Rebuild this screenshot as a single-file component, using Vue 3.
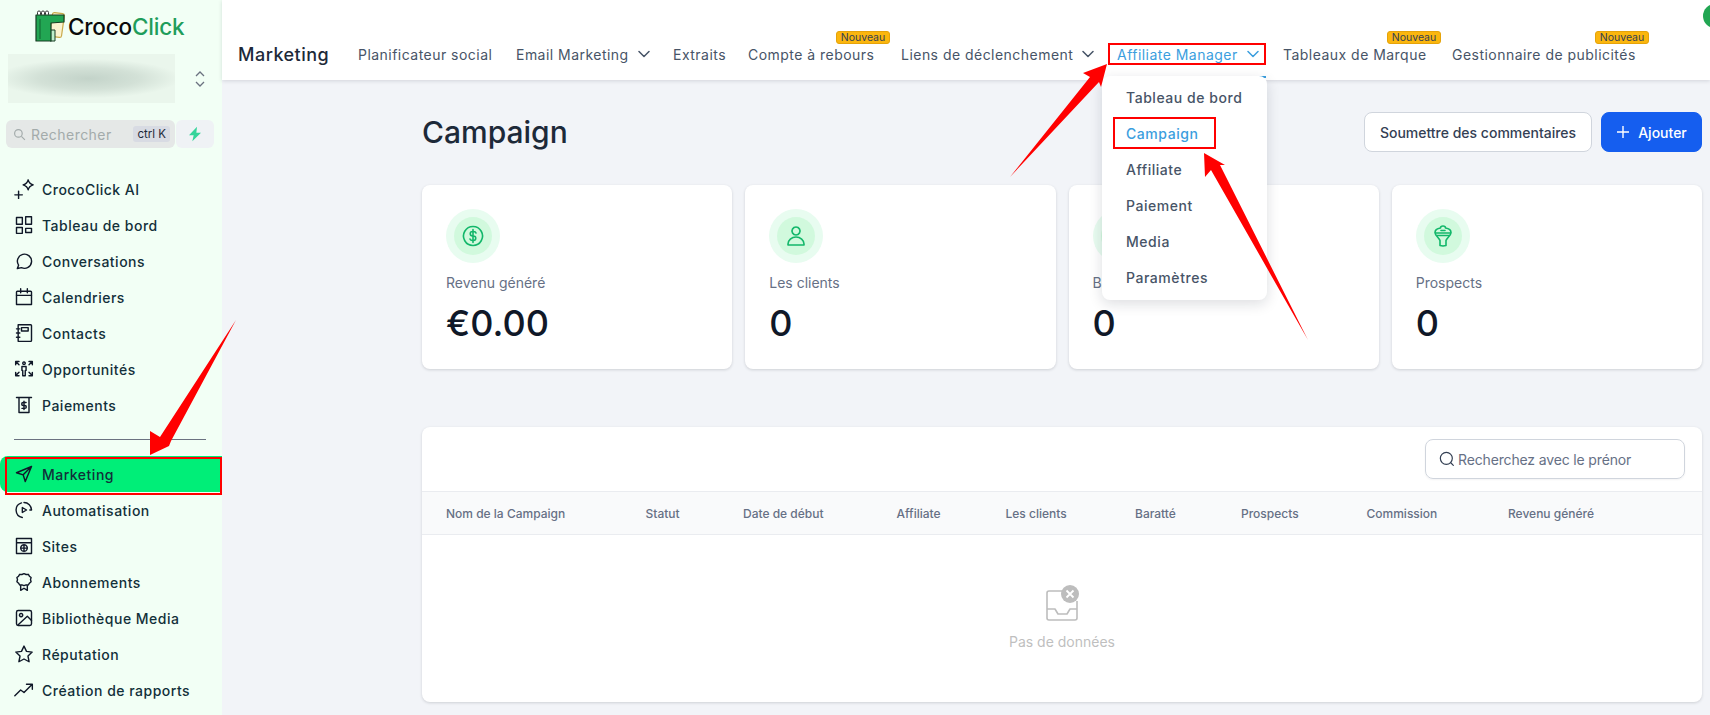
<template>
  <div class="page">
    <aside class="sidebar">
      <div class="logo">
        <svg class="logo-mark" viewBox="0 0 30 32" xmlns="http://www.w3.org/2000/svg">
          <rect x="16" y="3" width="12" height="24" rx="2" transform="rotate(8 22 15)" fill="#fbf3d0" stroke="#c9a94a" stroke-width="1.2" />
          <rect x="2.5" y="1" width="3" height="5" rx="1.4" fill="#fff" stroke="#333" />
          <rect x="6.5" y="1" width="3" height="5" rx="1.4" fill="#fff" stroke="#333" />
          <rect x="10.5" y="1" width="3" height="5" rx="1.4" fill="#fff" stroke="#333" />
          <path d="M15 31V20h5v11z" fill="#bfeecb" stroke="#173d23" />
          <path d="M1 5h28v7l-13 1v18H1z" fill="#22a653" stroke="#173d23" stroke-width="1.2" stroke-linejoin="round" />
          <path d="M5 9v20" stroke="#177a3b" stroke-width="1.5" />
        </svg>
        <span class="logo-text">Croco<span class="logo-green">Click</span></span>
      </div>

      <div class="account">
        <div class="account-blur"></div>
        <svg class="updown" viewBox="0 0 12 20" fill="none" stroke="#6b7280" stroke-width="1.3">
          <path d="M2 7l4-4 4 4M2 13l4 4 4-4" />
        </svg>
      </div>

      <div class="search-row">
        <div class="side-search">
          <svg viewBox="0 0 24 24" fill="none" stroke="#a3abab" stroke-width="2.2" class="side-search-icon">
            <circle cx="10" cy="10" r="7" />
            <path d="M15.5 15.5L22 22" />
          </svg>
          <span class="side-placeholder">Rechercher</span>
          <span class="kbd">ctrl K</span>
        </div>
        <div class="bolt">
          <svg viewBox="0 0 24 24" width="16" height="16">
            <path d="M15 1L3 14h7l-2 9 13-13h-7z" fill="#35d49a" />
          </svg>
        </div>
      </div>

      <nav class="side-nav">
        <a v-for="item in sideTop" :key="item.label" class="side-item">
          <svg class="side-icon" viewBox="0 0 24 24" fill="none" stroke="#101828" stroke-width="1.7" stroke-linecap="round" stroke-linejoin="round">
            <path v-for="d in item.paths" :key="d" :d="d" />
          </svg>
          {{ item.label }}
        </a>
      </nav>
      <div class="side-sep"></div>
      <nav class="side-nav">
        <a v-for="item in sideBottom" :key="item.label" class="side-item" :class="{ active: item.active }">
          <svg class="side-icon" viewBox="0 0 24 24" fill="none" stroke="#101828" stroke-width="1.7" stroke-linecap="round" stroke-linejoin="round">
            <path v-for="d in item.paths" :key="d" :d="d" />
          </svg>
          {{ item.label }}
        </a>
      </nav>
    </aside>

    <div class="main">
      <header class="topbar">
        <span class="avatar"></span>
        <h2 class="topbar-title">Marketing</h2>
        <div class="topnav">
          <div v-for="link in topLinks" :key="link.label" class="topnav-item" :class="{ current: link.current }">
            <span class="topnav-label">{{ link.label }}</span>
            <svg v-if="link.caret" class="caret" viewBox="0 0 12 12" fill="none" stroke="currentColor" stroke-width="1.5" stroke-linecap="round" stroke-linejoin="round">
              <path d="M1 3.5l5 5 5-5" />
            </svg>
            <span v-if="link.badge" class="badge">Nouveau</span>
          </div>
        </div>
        <span class="current-line"></span>
        <div class="dropdown">
          <a v-for="entry in menu" :key="entry" class="dropdown-item" :class="{ on: entry === 'Campaign' }">{{ entry }}</a>
        </div>
      </header>

      <main class="content">
        <div class="title-row">
          <h1 class="title">Campaign</h1>
          <div class="actions">
            <button class="btn">Soumettre des commentaires</button>
            <button class="btn primary">
              <svg viewBox="0 0 14 14" width="14" height="14" fill="none" stroke="#fff" stroke-width="1.4"><path d="M7 1v12M1 7h12" /></svg>
              Ajouter
            </button>
          </div>
        </div>

        <div class="stats">
          <div v-for="stat in stats" :key="stat.label" class="stat">
            <div class="stat-ring">
              <div class="stat-disc">
                <svg viewBox="0 0 24 24" width="24" height="24" fill="none" stroke="#12b76a" stroke-width="1.6" stroke-linecap="round" stroke-linejoin="round">
                  <path v-for="d in stat.paths" :key="d" :d="d" />
                </svg>
              </div>
            </div>
            <div class="stat-label">{{ stat.label }}</div>
            <div class="stat-value">{{ stat.value }}</div>
          </div>
        </div>

        <section class="table-card">
          <div class="table-tools">
            <div class="table-search">
              <svg viewBox="0 0 24 24" width="16" height="16" fill="none" stroke="#344054" stroke-width="1.8" stroke-linecap="round">
                <circle cx="11" cy="11" r="9" />
                <path d="M18 18l3.5 3.5" />
              </svg>
              <span>Recherchez avec le prénor</span>
            </div>
          </div>
          <div class="table-head">
            <span v-for="col in columns" :key="col">{{ col }}</span>
          </div>
          <div class="empty">
            <svg viewBox="0 0 34 36" width="34" height="36" fill="none" stroke="#bdbdbd" stroke-width="1.6">
              <path d="M24 6H4a2 2 0 0 0-2 2v25a2 2 0 0 0 2 2h26a2 2 0 0 0 2-2V16" />
              <path d="M2 24h8l3 5h9l3-5h7" stroke-linejoin="round" />
              <circle cx="25" cy="9" r="9" fill="#bdbdbd" stroke="none" />
              <path d="M21.5 5.5l7 7M28.5 5.5l-7 7" stroke="#fff" stroke-width="1.8" />
            </svg>
            <span>Pas de données</span>
          </div>
        </section>
      </main>
    </div>

    <!-- red annotations drawn on top of the screenshot -->
    <svg class="marks" viewBox="0 0 1710 715" xmlns="http://www.w3.org/2000/svg">
      <g fill="none" stroke="#f00" stroke-width="2">
        <rect x="1109" y="44" width="156" height="20" />
        <rect x="1114" y="118" width="101" height="30" />
        <rect x="6" y="458" width="215" height="36" />
      </g>
      <g fill="#f00">
        <polygon points="1010,177 1090,77 1083,73 1107,64 1101,87 1099,82" />
        <polygon points="1308,340 1220,165 1225,165 1204,153 1205,177 1211,170" />
        <polygon points="236,320 171,441 169,446 150,455 150,431 160,437" />
      </g>
    </svg>
  </div>
</template>

<script setup>
const sideTop = [
  { label: 'CrocoClick AI', paths: ['M1 19h9M5.5 14.5v9', 'M17 1c.7 3.200 2.200 4.800 6 6-3.800 1.200-5.300 2.800-6 6-.7-3.200-2.200-4.800-6-6 3.800-1.200 5.300-2.800 6-6z'] },
  { label: 'Tableau de bord', paths: ['M3 3h7v8H3zM14 2h7v9h-7zM14 16h7v5h-7zM3 15h7v7H3z'] },
  { label: 'Conversations', paths: ['M4 21l1.500-4A8.500 8.500 0 1 1 9 20z'] },
  { label: 'Calendriers', paths: ['M4 5h16a1 1 0 0 1 1 1v15H3V6a1 1 0 0 1 1-1z', 'M3 10h18M8 2v5M16 2v5'] },
  { label: 'Contacts', paths: ['M5 2h15a1 1 0 0 1 1 1v18a1 1 0 0 1-1 1H5z', 'M9 5.500h8v4H9z', 'M3 7h4M3 12h4M3 17h4'] },
  { label: 'Opportunités', paths: ['M12 3.500a1.500 1.500 0 1 0 .01 0z', 'M9.500 9h5v4.500l-1 .5V20h-3v-6l-1-.5z', 'M2 3h4M2 3v4M3 4l3 3M22 3h-4M22 3v4M21 4l-3 3M2 20h4M2 20v-4M3 19l3-3M22 20h-4M22 20v-4M21 19l-3-3'] },
  { label: 'Paiements', paths: ['M3 3h18M6 3v18h12V3', 'M14.500 9h-3.500a1.500 1.500 0 0 0 0 3.500h2a1.500 1.500 0 0 1 0 3.500H9.500M12 7.500v10'] }
]

const sideBottom = [
  { label: 'Marketing', active: true, paths: ['M21 3L3 10.500l8 2.500 2.500 8zM11 13l10-10'] },
  { label: 'Automatisation', paths: ['M12 3a9 9 0 0 1 9 9h-2M10 21a9 9 0 0 1-1-17.500', 'M10 9l5 3-5 3z'] },
  { label: 'Sites', paths: ['M3 3h18v18H3zM3 8h18', 'M12 10.500a4 4 0 1 0 .01 0zM8 14.500h8M12 10.500v8'] },
  { label: 'Abonnements', paths: ['M12 2l2.500 1 2.700-.2 1.300 2.200 2 1.700-.7 2.500.7 2.500-2 1.700-1.300 2.200-2.700-.2-2.500 1-2.500-1-2.700.2-1.300-2.200-2-1.700.7-2.500-.7-2.500 2-1.700 1.300-2.200 2.700.2z', 'M8 16.500V22l4-2.500 4 2.500v-5.500'] },
  { label: 'Bibliothèque Media', paths: ['M5 3h14a2 2 0 0 1 2 2v14a2 2 0 0 1-2 2H5a2 2 0 0 1-2-2V5a2 2 0 0 1 2-2z', 'M8.500 6.500a2 2 0 1 0 .01 0zM5 20l11-10 5 5'] },
  { label: 'Réputation', paths: ['M12 2.500l3 6.300 6.800.9-5 4.800 1.300 6.800-6.100-3.300-6.100 3.300 1.300-6.800-5-4.800 6.800-.9z'] },
  { label: 'Création de rapports', paths: ['M1 19l7-7 4 3 9-9M15 5h7v6'] }
]

const topLinks = [
  { label: 'Planificateur social' },
  { label: 'Email Marketing', caret: true },
  { label: 'Extraits' },
  { label: 'Compte à rebours', badge: true },
  { label: 'Liens de déclenchement', caret: true },
  { label: 'Affiliate Manager', caret: true, current: true },
  { label: 'Tableaux de Marque', badge: true },
  { label: 'Gestionnaire de publicités', badge: true }
]

const menu = ['Tableau de bord', 'Campaign', 'Affiliate', 'Paiement', 'Media', 'Paramètres']

const stats = [
  { label: 'Revenu généré', value: '€0.00', paths: ['M12 2.500a9.500 9.500 0 1 0 .01 0z', 'M15 9a2.500 2 0 0 0-2.500-1.500h-1a2.200 2.200 0 0 0 0 4.500h1a2.200 2.200 0 0 1 0 4.500h-1A2.500 2 0 0 1 9 15M12 5.500v13'] },
  { label: 'Les clients', value: '0', paths: ['M12 3a4 4 0 1 0 .01 0z', 'M4 21v-1a8 7 0 0 1 16 0v1z'] },
  { label: 'Baratté', value: '0', paths: ['M12 3a9 9 0 1 0 .01 0z'] },
  { label: 'Prospects', value: '0', paths: ['M12 2c1.500 0 2.500 1 2.500 2 3 .5 5.500 2 5.500 4.500 0 3-4 5-5 8v5l-3 .5-3-.5v-5c-1-3-5-5-5-8C4 6 6.500 4.500 9.500 4c0-1 1-2 2.500-2z', 'M4.500 9h15M6 11.500h12M10 6.500h4'] }
]

const columns = ['Nom de la Campaign', 'Statut', 'Date de début', 'Affiliate', 'Les clients', 'Baratté', 'Prospects', 'Commission', 'Revenu généré']
</script>

<style scoped>
.page {
  position: relative;
  display: flex;
  width: 1710px;
  height: 715px;
  overflow: hidden;
  background: #f2f4f8;
  font-family: Inter, "Liberation Sans", sans-serif;
}

.sidebar {
  width: 222px;
  flex-shrink: 0;
  background: #f2fff5;
  color: #12303a;
}

.logo {
  display: flex;
  align-items: center;
  height: 32px;
  margin-top: 10px;
  padding-left: 35px;
}

.logo-mark {
  width: 30px;
  height: 32px;
}

.logo-text {
  margin-left: 3px;
  font-size: 22.5px;
  font-weight: 500;
  letter-spacing: -0.2px;
  color: #0b0b0b;
}

.logo-green {
  color: #1f9d5b;
}

.account {
  display: flex;
  align-items: center;
  height: 49px;
  margin-top: 12px;
  padding-left: 8px;
}

.account-blur {
  width: 167px;
  height: 49px;
  background: radial-gradient(ellipse 55% 40% at 48% 50%, #c3d3c9 0%, #d3e1d7 55%, #eaf6ec 100%);
}

.updown {
  width: 12px;
  height: 20px;
  margin-left: 19px;
}

.search-row {
  display: flex;
  margin-top: 17px;
  padding-left: 6px;
}

.side-search {
  display: flex;
  align-items: center;
  width: 169px;
  height: 28px;
  box-sizing: border-box;
  padding: 0 5px 0 7px;
  background: #e5e8e7;
  border-radius: 6px;
}

.side-search-icon {
  width: 13px;
  height: 13px;
}

.side-placeholder {
  margin-left: 5px;
  font-size: 14px;
  letter-spacing: 0.45px;
  color: #a3abab;
}

.kbd {
  margin-left: auto;
  padding: 0 4px;
  line-height: 16px;
  font-size: 11.5px;
  color: #1d2939;
  background: #d8dbe3;
  border-radius: 3px;
}

.bolt {
  display: flex;
  align-items: center;
  justify-content: center;
  width: 38px;
  height: 28px;
  margin-left: 1px;
  background: #eff2f5;
  border-radius: 6px;
}

.side-nav {
  display: flex;
  flex-direction: column;
}

.search-row + .side-nav {
  margin-top: 23px;
}

.side-item {
  display: flex;
  align-items: center;
  gap: 8px;
  height: 36px;
  padding-left: 14px;
  font-size: 14px;
  font-weight: 500;
  letter-spacing: 0.5px;
}

.side-item.active {
  background: #00ee78;
  border-radius: 8px 0 0 8px;
}

.side-icon {
  width: 20px;
  height: 20px;
  flex-shrink: 0;
}

.side-sep {
  width: 192px;
  height: 1px;
  margin: 16px 0 16px 14px;
  background: #6b7280;
}

.main {
  flex: 1;
  min-width: 0;
}

.topbar {
  position: relative;
  display: flex;
  align-items: center;
  height: 80px;
  padding: 28px 0 0 16px;
  box-sizing: border-box;
  background: #fff;
  box-shadow: 0 1px 4px rgba(16, 24, 40, 0.14);
}

.avatar {
  position: absolute;
  top: 4px;
  left: 1481px;
  width: 24px;
  height: 24px;
  background: #22a653;
  border-radius: 50%;
}

.topbar-title {
  width: 120px;
  margin: 0;
  font-size: 18px;
  font-weight: 500;
  letter-spacing: 0.5px;
  color: #1d2939;
}

.topnav {
  display: grid;
  grid-template-columns: 158px 157px 75px 153px 216px 166px 169px 190px;
  align-items: center;
  font-size: 14px;
  letter-spacing: 0.47px;
  color: #475467;
}

.topnav-item {
  position: relative;
  display: flex;
  align-items: center;
  gap: 9px;
  white-space: nowrap;
}

.topnav-item.current {
  color: #3b9ede;
}

.caret {
  width: 12px;
  height: 12px;
}

.badge {
  position: absolute;
  top: -15px;
  box-sizing: border-box;
  width: 54px;
  height: 13px;
  line-height: 12px;
  text-align: center;
  font-size: 10.5px;
  letter-spacing: 0;
  color: #344054;
  background: #fbb60e;
  border: 1px solid #e5a30a;
  border-radius: 3px;
}

.topnav-item:nth-child(4) .badge {
  left: 88px;
}

.topnav-item:nth-child(7) .badge {
  left: 104px;
}

.topnav-item:nth-child(8) .badge {
  left: 143px;
}

.current-line {
  position: absolute;
  top: 76px;
  left: 1036px;
  width: 8px;
  height: 2px;
  background: #3b9ede;
}

.dropdown {
  position: absolute;
  top: 76px;
  left: 880px;
  z-index: 2;
  display: flex;
  flex-direction: column;
  box-sizing: border-box;
  width: 165px;
  height: 224px;
  padding: 4px 0;
  background: #fff;
  border-radius: 8px;
  box-shadow: 0 4px 14px rgba(16, 24, 40, 0.14);
}

.dropdown-item {
  height: 36px;
  padding-left: 24px;
  line-height: 36px;
  font-size: 14px;
  font-weight: 500;
  letter-spacing: 0.55px;
  color: #475467;
}

.dropdown-item.on {
  color: #3b9ede;
}

.content {
  padding: 32px 8px 0 200px;
}

.title-row {
  display: flex;
  align-items: center;
  justify-content: space-between;
  height: 40px;
}

.title {
  margin: 0;
  font-size: 30px;
  font-weight: 500;
  color: #1d2939;
}

.actions {
  display: flex;
  gap: 9px;
}

.btn {
  display: flex;
  align-items: center;
  justify-content: center;
  gap: 8px;
  width: 228px;
  height: 40px;
  font-family: inherit;
  font-size: 14px;
  font-weight: 500;
  color: #344054;
  background: #fff;
  border: 1px solid #d0d5dd;
  border-radius: 8px;
}

.btn.primary {
  width: 101px;
  color: #fff;
  background: #155eef;
  border-color: #155eef;
}

.stats {
  display: grid;
  grid-template-columns: repeat(4, 1fr);
  gap: 13px;
  margin-top: 33px;
}

.stat {
  box-sizing: border-box;
  height: 184px;
  padding: 24px;
  background: #fff;
  border-radius: 8px;
  box-shadow: 0 1px 3px rgba(16, 24, 40, 0.16);
}

.stat-ring {
  display: flex;
  align-items: center;
  justify-content: center;
  width: 54px;
  height: 54px;
  background: #e8fcf0;
  border-radius: 50%;
}

.stat-disc {
  display: flex;
  align-items: center;
  justify-content: center;
  width: 38px;
  height: 38px;
  background: #d1f9dd;
  border-radius: 50%;
}

.stat-label {
  margin-top: 10px;
  line-height: 20px;
  font-size: 14px;
  color: #667085;
}

.stat-value {
  margin-top: 8px;
  line-height: 44px;
  font-size: 36px;
  font-weight: 500;
  color: #101828;
}

.table-card {
  height: 275px;
  margin-top: 58px;
  overflow: hidden;
  background: #fff;
  border-radius: 8px;
  box-shadow: 0 1px 3px rgba(16, 24, 40, 0.16);
}

.table-tools {
  display: flex;
  justify-content: flex-end;
  box-sizing: border-box;
  height: 64px;
  padding: 12px 17px 0 0;
}

.table-search {
  display: flex;
  align-items: center;
  gap: 3px;
  box-sizing: border-box;
  width: 260px;
  height: 40px;
  padding-left: 13px;
  font-size: 14px;
  letter-spacing: -0.15px;
  color: #667085;
  border: 1px solid #d0d5dd;
  border-radius: 8px;
  box-shadow: 0 1px 2px rgba(16, 24, 40, 0.05);
}

.table-head {
  display: grid;
  grid-template-columns: 199.5px 97.5px 153.5px 109px 129.5px 106px 125.5px 141.5px 1fr;
  align-items: center;
  box-sizing: border-box;
  height: 44px;
  padding-left: 24px;
  font-size: 12px;
  font-weight: 500;
  color: #667085;
  background: #f9fafb;
  border-top: 1px solid #eaecf0;
  border-bottom: 1px solid #eaecf0;
}

.empty {
  display: flex;
  flex-direction: column;
  align-items: center;
  gap: 12px;
  padding-top: 50px;
  font-size: 14px;
  color: #bfbfbf;
}

.marks {
  position: absolute;
  top: 0;
  left: 0;
  z-index: 5;
  width: 1710px;
  height: 715px;
  pointer-events: none;
}
</style>

<style>
body {
  margin: 0;
}
</style>
